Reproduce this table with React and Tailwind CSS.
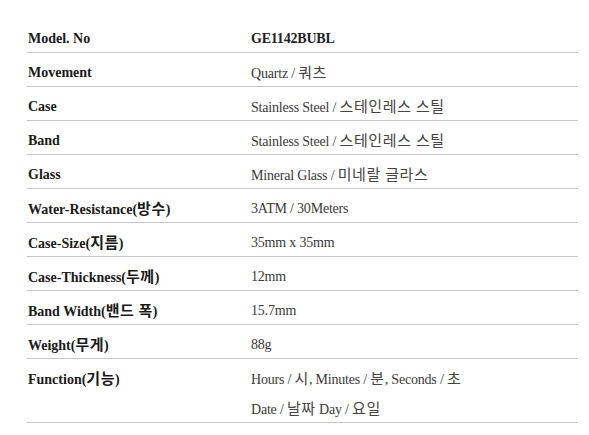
const specs = [
  { label: 'Model. No', value: ['GE1142BUBL'], bold: true },
  { label: 'Movement', value: ['Quartz / 쿼츠'] },
  { label: 'Case', value: ['Stainless Steel / 스테인레스 스틸'] },
  { label: 'Band', value: ['Stainless Steel / 스테인레스 스틸'] },
  { label: 'Glass', value: ['Mineral Glass / 미네랄 글라스'] },
  { label: 'Water-Resistance(방수)', value: ['3ATM / 30Meters'] },
  { label: 'Case-Size(지름)', value: ['35mm x 35mm'] },
  { label: 'Case-Thickness(두께)', value: ['12mm'] },
  { label: 'Band Width(밴드 폭)', value: ['15.7mm'] },
  { label: 'Weight(무게)', value: ['88g'] },
  { label: 'Function(기능)', value: ['Hours / 시, Minutes / 분, Seconds / 초', 'Date / 날짜 Day / 요일'] },
];

const font = "font-['Times_New_Roman','Liberation_Serif','Noto_Sans_CJK_KR',serif]";

// Korean runs are drawn a touch wider, as in the reference
function Mixed({ text, korean }) {
  return text.split(/([가-힣]+(?: [가-힣]+)*)/).map((part, i) =>
    /[가-힣]/.test(part) ? (
      <span key={i} className={korean}>{part}</span>
    ) : (
      <span key={i}>{part}</span>
    )
  );
}

export default function App() {
  return (
    <div className={`min-h-screen w-[589px] bg-white pt-[19px] ${font}`}>
      <div className="ml-[27px] w-[551px]">
        {specs.map((row) => (
          <div key={row.label} className="flex border-b border-[#c6c6c6] pt-[10px] pb-[3px]">
            <div className="h-[20px] w-[214px] whitespace-nowrap pl-px text-[14px] leading-[20px] font-bold text-[#1a1a1a]">
              <Mixed text={row.label} korean="text-[15px] leading-[20px] tracking-[0.5px]" />
            </div>
            <div className="flex-1 pl-[10px] text-[14px] leading-[20px] tracking-[-0.2px] text-[#3a3a3a]">
              {row.value.map((line, i) => (
                <div
                  key={i}
                  className={`h-[20px] whitespace-nowrap ${row.bold ? 'font-bold text-[#222]' : ''} ${i > 0 ? 'mt-[10px]' : ''}`}
                >
                  <Mixed text={line} korean="text-[15px] leading-[20px] tracking-[0.6px] text-[#444]" />
                </div>
              ))}
            </div>
          </div>
        ))}
      </div>
    </div>
  );
}
